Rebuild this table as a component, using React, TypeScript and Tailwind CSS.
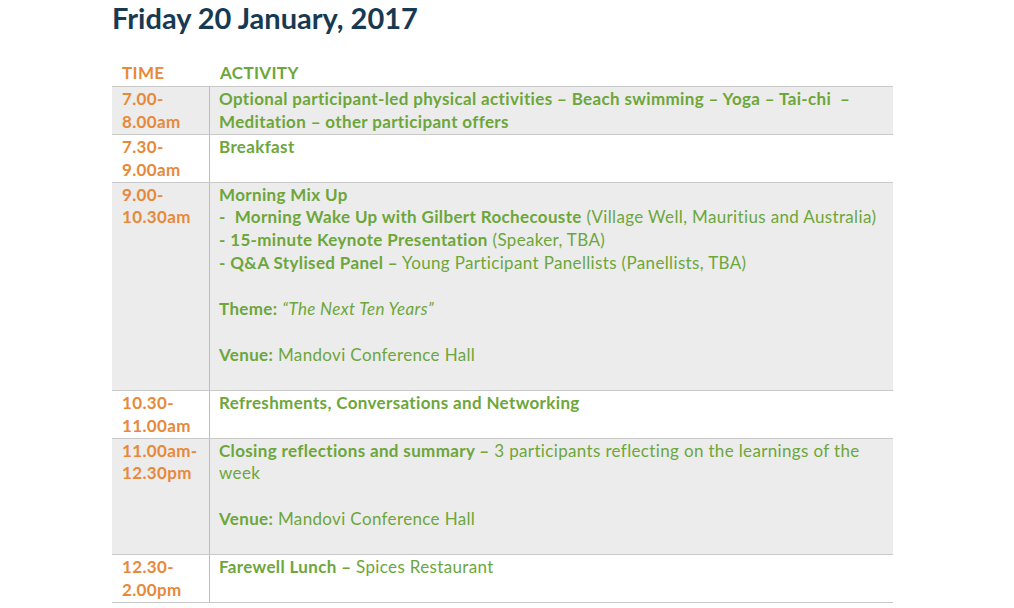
import React from "react";

const G = "text-[#6da63a]";
const O = "text-[#e8893a]";

function Row({ time, gray, children }: { time: React.ReactNode; gray?: boolean; children: React.ReactNode }) {
  return (
    <div className={`flex border-b border-[#c9c9c9] ${gray ? "bg-[#ececec]" : "bg-white"}`}>
      <div className={`w-[98px] shrink-0 pl-[10px] pt-[1px] border-r border-[#bdbdbd] font-bold ${O}`}>{time}</div>
      <div className={`flex-1 pl-[9px] pt-[1px] ${G}`}>{children}</div>
    </div>
  );
}

export default function App() {
  return (
    <div className="w-[1014px] h-[608px] bg-white overflow-hidden" style={{ fontFamily: "Lato, 'Open Sans', sans-serif" }}>
      <div className="pl-[112px] pt-[1px] text-[29px] leading-[34px] font-bold text-[#173a52]">Friday 20 January, 2017</div>
      <div className="ml-[112px] mt-[27px] w-[781px] text-[17px] tracking-[0.35px] leading-[22.9px]">
        <div className="flex pb-[1px] border-b border-[#c9c9c9]">
          <div className={`w-[98px] shrink-0 pl-[10px] font-bold ${O}`}>TIME</div>
          <div className={`flex-1 pl-[10px] font-bold ${G}`}>ACTIVITY</div>
        </div>
        <Row gray time={<>7.00-<br />8.00am</>}>
          <b>Optional participant-led physical activities – Beach swimming – Yoga – Tai-chi&nbsp; –<br />Meditation – other participant offers</b>
        </Row>
        <Row time={<>7.30-<br />9.00am</>}>
          <b>Breakfast</b>
          <div>&nbsp;</div>
        </Row>
        <Row gray time={<>9.00-<br />10.30am</>}>
          <div><b>Morning Mix Up</b></div>
          <div><b>-&nbsp; Morning Wake Up with Gilbert Rochecouste</b> (Village Well, Mauritius and Australia)</div>
          <div><b>- 15-minute Keynote Presentation</b> (Speaker, TBA)</div>
          <div><b>- Q&amp;A Stylised Panel –</b> Young Participant Panellists (Panellists, TBA)</div>
          <div>&nbsp;</div>
          <div><b>Theme:</b> <i>“The Next Ten Years”</i></div>
          <div>&nbsp;</div>
          <div><b>Venue:</b> Mandovi Conference Hall</div>
          <div>&nbsp;</div>
        </Row>
        <Row time={<>10.30-<br />11.00am</>}>
          <b>Refreshments, Conversations and Networking</b>
          <div>&nbsp;</div>
        </Row>
        <Row gray time={<>11.00am-<br />12.30pm</>}>
          <div><b>Closing reflections and summary –</b> 3 participants reflecting on the learnings of the</div>
          <div>week</div>
          <div>&nbsp;</div>
          <div><b>Venue:</b> Mandovi Conference Hall</div>
          <div>&nbsp;</div>
        </Row>
        <Row time={<>12.30-<br />2.00pm</>}>
          <div><b>Farewell Lunch –</b> Spices Restaurant</div>
          <div>&nbsp;</div>
        </Row>
      </div>
    </div>
  );
}
